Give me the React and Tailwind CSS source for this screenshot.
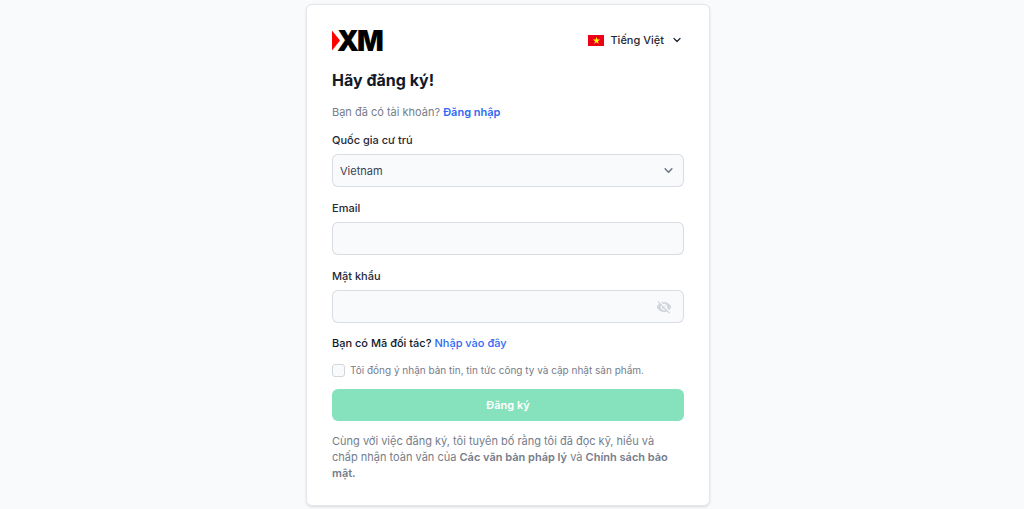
import { useState } from "react";

const FIELD =
  "w-full h-[33px] rounded-md border border-gray-300/80 bg-gray-50 px-[7px] text-[11px] leading-4 text-gray-700 outline-none focus:border-blue-500";
const LABEL = "mb-[6px] font-medium text-[#1f2937]";

function Logo() {
  return (
    <svg viewBox="0 0 51 21" className="h-[21px] w-[51px] overflow-visible" role="img" aria-label="XM">
      <text x="5" y="21" fontFamily="Inter, sans-serif" fontWeight="900" fontSize="28" fill="#000">
        X
      </text>
      <text x="25" y="21" fontFamily="Inter, sans-serif" fontWeight="900" fontSize="28" fill="#000">
        M
      </text>
      <path d="M0 0.5 L8 10.5 L0 20.5 Z" fill="#ff0000" />
    </svg>
  );
}

function Flag() {
  return (
    <svg viewBox="0 0 16 11" className="h-[11px] w-4" aria-hidden="true">
      <rect width="16" height="11" fill="#ec0015" />
      <path
        d="M8.5 2l.9 2.6h2.7L9.9 6.2l.8 2.6-2.2-1.6-2.2 1.6.8-2.6-2.2-1.6h2.7z"
        fill="#ff0"
      />
    </svg>
  );
}

function Chevron({ className }) {
  return (
    <svg viewBox="0 0 8 6" fill="none" stroke="currentColor" className={className} aria-hidden="true">
      <path d="M1 1.5l3 3 3-3" strokeWidth="1.3" strokeLinecap="round" strokeLinejoin="round" />
    </svg>
  );
}

function EyeOff() {
  return (
    <svg viewBox="0 0 24 24" className="size-4" fill="currentColor" aria-hidden="true">
      <path d="M12 7c2.76 0 5 2.24 5 5 0 .65-.13 1.26-.36 1.83l2.92 2.92c1.51-1.26 2.7-2.89 3.43-4.75-1.73-4.39-6-7.5-11-7.5-1.4 0-2.74.25-3.98.7l2.16 2.16C10.74 7.13 11.35 7 12 7zM2 4.27l2.28 2.28.46.46C3.08 8.3 1.78 10.02 1 12c1.73 4.39 6 7.5 11 7.5 1.55 0 3.03-.3 4.38-.84l.42.42L19.73 22 21 20.73 3.27 3 2 4.27zM7.53 9.8l1.55 1.55c-.05.21-.08.43-.08.65 0 1.66 1.34 3 3 3 .22 0 .44-.03.65-.08l1.55 1.55c-.67.33-1.41.53-2.2.53-2.76 0-5-2.24-5-5 0-.79.2-1.53.53-2.2zm4.31-.78l3.15 3.15.02-.16c0-1.66-1.34-3-3-3l-.17.01z" />
    </svg>
  );
}

export default function App() {
  const [country, setCountry] = useState("vn");
  const [showPassword, setShowPassword] = useState(false);

  return (
    <main className="flex min-h-screen justify-center bg-gray-50 pt-1 pr-2 pb-[3px] font-['Inter',sans-serif] text-[11px] leading-4">
      <div className="w-full max-w-[404px] rounded-md border border-gray-200 bg-white px-[25px] pt-[25px] pb-6 shadow-sm">
        <header className="flex h-[21px] items-start justify-between">
          <Logo />
          <button type="button" className="flex h-5 items-center font-medium text-[#1f2937]">
            <Flag />
            <span className="ml-[6px]">Tiếng Việt</span>
            <Chevron className="mr-[3px] ml-[9px] h-[6px] w-2" />
          </button>
        </header>

        <h1 className="mt-[17px] text-base leading-6 font-bold text-[#111827]">Hãy đăng ký!</h1>
        <p className="mt-3 text-[#767d8b]">
          Bạn đã có tài khoản?{" "}
          <a href="#login" className="font-semibold text-[#2f6bf0]">
            Đăng nhập
          </a>
        </p>

        <form className="mt-3 flex flex-col" onSubmit={(e) => e.preventDefault()}>
          <label htmlFor="country" className={LABEL}>
            Quốc gia cư trú
          </label>
          <div className="relative mb-[13px]">
            <select
              id="country"
              value={country}
              onChange={(e) => setCountry(e.target.value)}
              className={`${FIELD} block appearance-none`}
            >
              <option value="vn">Vietnam</option>
            </select>
            <Chevron className="pointer-events-none absolute inset-y-0 right-[11px] my-auto h-[7px] w-[9px] text-gray-500" />
          </div>

          <label htmlFor="email" className={LABEL}>
            Email
          </label>
          <input id="email" type="email" className={`${FIELD} mb-[13px]`} />

          <label htmlFor="password" className={LABEL}>
            Mật khẩu
          </label>
          <div className="relative mb-3">
            <input
              id="password"
              type={showPassword ? "text" : "password"}
              className={`${FIELD} block pr-9`}
            />
            <button
              type="button"
              aria-label="Hiện mật khẩu"
              onClick={() => setShowPassword(!showPassword)}
              className="absolute inset-y-0 right-3 flex items-center text-gray-300"
            >
              <EyeOff />
            </button>
          </div>

          <p className="font-medium text-[#111827]">
            Bạn có Mã đối tác?{" "}
            <a href="#partner" className="text-[#2f6bf0]">
              Nhập vào đây
            </a>
          </p>

          <label className="mt-[11px] flex items-center gap-[5px] text-[10px] text-[#767d8b]">
            <input
              type="checkbox"
              className="size-[13px] appearance-none rounded-[3px] border border-gray-300 bg-gray-50 checked:bg-blue-600"
            />
            Tôi đồng ý nhận bản tin, tin tức công ty và cập nhật sản phẩm.
          </label>

          <button
            type="submit"
            className="mt-[11px] h-8 rounded-md bg-[#86e2bc] font-semibold text-white"
          >
            Đăng ký
          </button>
        </form>

        <p className="mt-3 pr-3 text-[#767d8b]">
          Cùng với việc đăng ký, tôi tuyên bố rằng tôi đã đọc kỹ, hiểu và chấp nhận toàn văn của{" "}
          <a href="#legal" className="font-semibold">
            Các văn bản pháp lý
          </a>{" "}
          và{" "}
          <a href="#privacy" className="font-semibold">
            Chính sách bảo mật.
          </a>
        </p>
      </div>
    </main>
  );
}
